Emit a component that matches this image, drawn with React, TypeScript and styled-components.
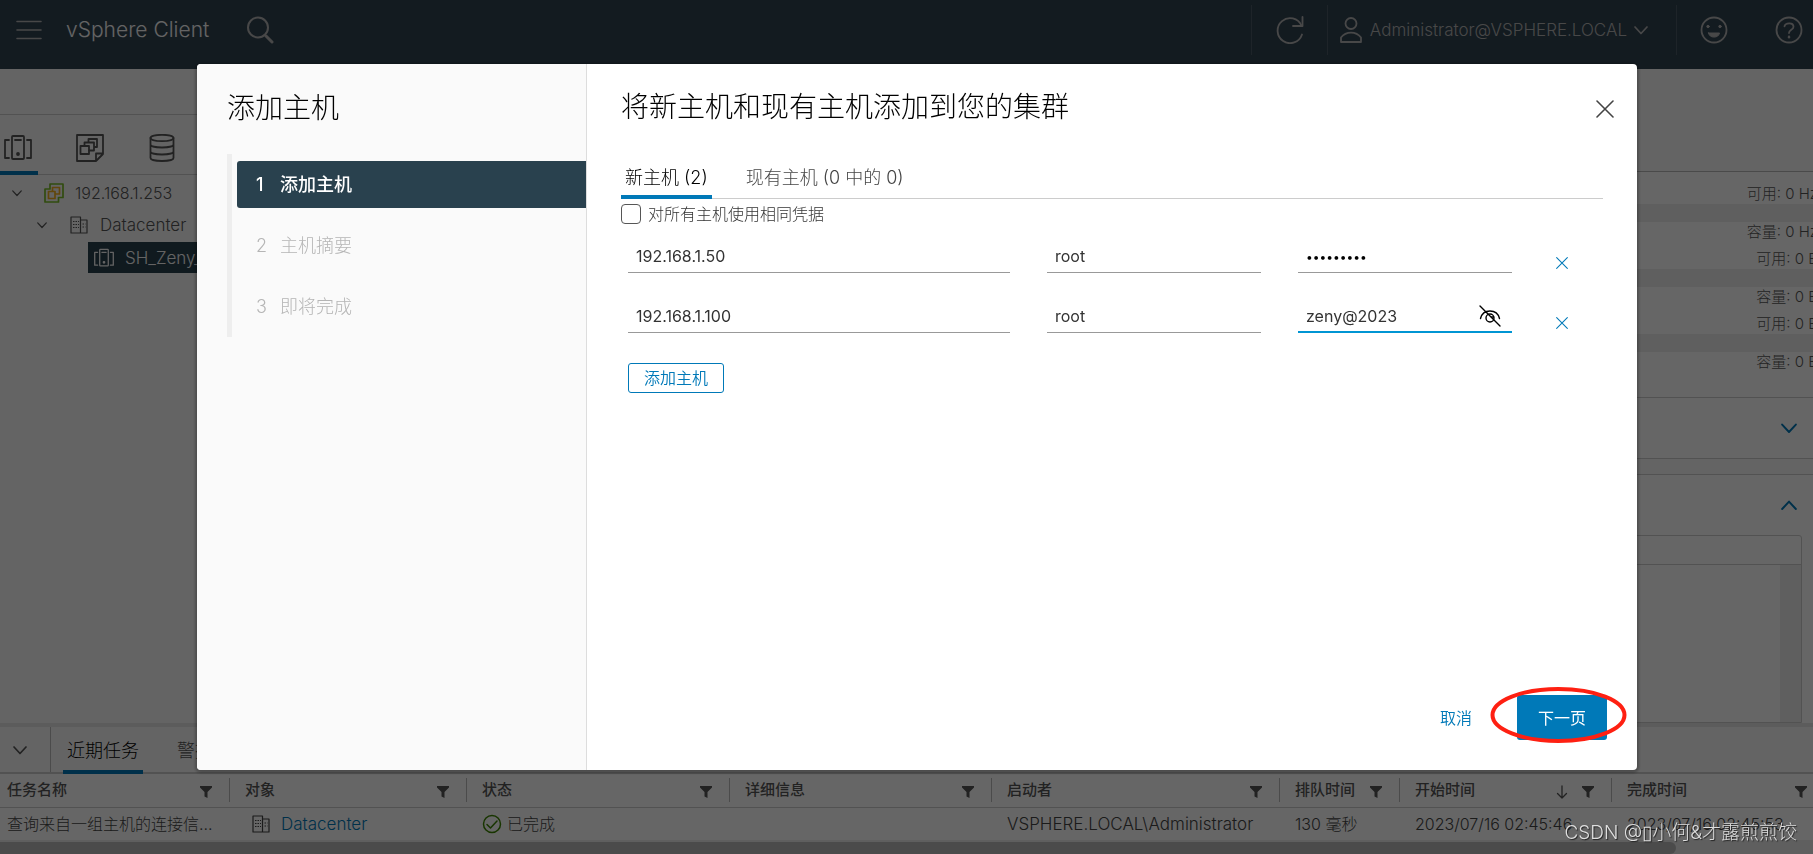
import React from 'react';
import styled, { createGlobalStyle, css } from 'styled-components';

const GlobalStyle = createGlobalStyle`
  *, *::before, *::after { box-sizing: border-box; }
  body {
    margin: 0;
    overflow: hidden;
    background: #fafafa;
    color: #565656;
    font: 300 16px/20px Inter, 'Noto Sans CJK SC', sans-serif;
  }
  button, input { font: inherit; color: inherit; }
  button { background: none; border: 0; padding: 0; cursor: pointer; }
  a { text-decoration: none; }
  svg { display: block; flex: none; }
`;

/* ---------- Icons ---------- */

const Svg = styled.svg<{ $stroke?: number }>`
  fill: none;
  stroke: currentColor;
  stroke-width: ${(p) => p.$stroke ?? 2};
  stroke-linecap: round;
  stroke-linejoin: round;
`;

type IconProps = { size?: number };

const ChevronDown = ({ size = 14 }: IconProps) => (
  <Svg width={size} height={size} viewBox="0 0 14 14" $stroke={1.7}>
    <path d="M1 4l6 6.5L13 4" />
  </Svg>
);
const ChevronUp = ({ size = 14 }: IconProps) => (
  <Svg width={size} height={size} viewBox="0 0 14 14" $stroke={1.7}>
    <path d="M1 10.5L7 4l6 6.5" />
  </Svg>
);
const CrossIcon = ({ size = 18 }: IconProps) => (
  <Svg width={size} height={size} viewBox="0 0 18 18" $stroke={1.6}>
    <path d="M1 1l16 16M17 1L1 17" />
  </Svg>
);
const MenuIcon = () => (
  <Svg width="26" height="20" viewBox="0 0 26 20" $stroke={1.6}>
    <path d="M1 1.5h24M1 10h24M1 18.5h24" />
  </Svg>
);
const SearchIcon = () => (
  <Svg width="28" height="28" viewBox="0 0 28 28">
    <circle cx="12" cy="11.500" r="10" />
    <path d="M20 20l6 6" strokeWidth="3" />
  </Svg>
);
const RefreshIcon = () => (
  <Svg width="28" height="28" viewBox="0 0 28 28" $stroke={1.8}>
    <path d="M26 18.500A12.500 12.500 0 1 1 25.500 9.500" />
    <path d="M26.500 1v9h-9.500" />
  </Svg>
);
const UserIcon = () => (
  <Svg width="24" height="28" viewBox="0 0 24 28" $stroke={1.8}>
    <circle cx="12" cy="7.500" r="5.500" />
    <path d="M2 26v-4.500c5-6.500 15-6.500 20 0V26z" />
  </Svg>
);
const SmileyIcon = () => (
  <Svg width="28" height="28" viewBox="0 0 28 28" $stroke={1.8}>
    <circle cx="14" cy="14" r="12.500" />
    <circle cx="8" cy="10.500" r="1.200" fill="currentColor" strokeWidth="1" />
    <circle cx="20" cy="10.500" r="1.200" fill="currentColor" strokeWidth="1" />
    <path d="M8.500 17h11a5.600 5 0 0 1-11 0z" fill="currentColor" strokeWidth="1" />
  </Svg>
);
const HelpIcon = () => (
  <Svg width="28" height="28" viewBox="0 0 28 28" $stroke={1.8}>
    <circle cx="14" cy="14" r="12.500" />
    <path d="M9.500 10.300c1-4 9-4 9 .4 0 3.200-4.500 3-4.500 6.300" />
    <path d="M14 20.800v.4" strokeWidth="2.400" />
  </Svg>
);
const ClusterIcon = ({ size = 28 }: IconProps) => (
  <Svg width={size} height={size} viewBox="0 0 28 28" $stroke={1.8}>
    <rect x="8" y="2" width="12" height="23" rx="1" />
    <path d="M11 6h6M5 6H1v18h4M23 6h4v18h-4" />
    <circle cx="14" cy="20" r="1" fill="currentColor" />
  </Svg>
);
const TemplatesIcon = () => (
  <Svg width="28" height="28" viewBox="0 0 28 28" $stroke={1.8}>
    <path d="M27 1H1v26h19l7-7zM27 19.500h-7V27" />
    <rect x="4.500" y="12" width="8.500" height="8" />
    <path d="M8.500 12V8.500H18v8h-5M12.500 8.500V5H21v8h-3" />
  </Svg>
);
const StorageIcon = () => (
  <Svg width="28" height="28" viewBox="0 0 28 28" $stroke={1.8}>
    <ellipse cx="14" cy="4" rx="11.500" ry="3.200" />
    <path d="M2.500 4v20c0 4 23 4 23 0V4M2.500 10.500c0 4 23 4 23 0M2.500 17.500c0 4 23 4 23 0" />
  </Svg>
);
const VCenterIcon = () => (
  <Svg width="20" height="20" viewBox="0 0 20 20" $stroke={1.7}>
    <path d="M6 1h13v13.500h-4.500V19H1V6h5z" stroke="#7bbd27" />
    <path d="M8.500 8V4.500h7V11H12M4.500 8.500H11v7H4.500z" stroke="#f2b01e" />
  </Svg>
);
const DatacenterIcon = () => (
  <Svg width="18" height="18" viewBox="0 0 18 18" $stroke={1.2}>
    <path d="M1 17V1h9.500v16zM10.500 4H17v13H1" />
    <path
      d="M3 5.500h6M3 8.500h6M3 11.500h6M12.500 8h3M12.500 11h3"
      strokeDasharray="1.500 1"
      strokeLinecap="butt"
    />
  </Svg>
);
const FilterIcon = () => (
  <Svg width="12" height="12" viewBox="0 0 12 12">
    <path d="M0 0h12v1.500L7.500 6v6L4.500 10.500V6L0 1.500z" fill="currentColor" stroke="none" />
  </Svg>
);
const SortDownIcon = () => (
  <Svg width="12" height="14" viewBox="0 0 12 14" $stroke={1.3}>
    <path d="M6 1v12M1.500 8.500L6 13l4.500-4.500" />
  </Svg>
);
const SuccessIcon = () => (
  <Svg width="20" height="20" viewBox="0 0 20 20" $stroke={1.5}>
    <g stroke="#3c8500">
      <circle cx="10" cy="10" r="8.500" />
      <path d="M5 10.500l3.500 3.500L15 7" />
    </g>
  </Svg>
);
const EyeOffIcon = () => (
  <Svg width="22" height="22" viewBox="0 0 22 22" $stroke={1.4}>
    <g stroke="#000">
      <path d="M1 1l20 20M1.500 13.500C4 3.500 18 3.500 20.500 13.500" />
      <circle cx="11" cy="13" r="4" />
      <path d="M12.500 12h2" />
    </g>
  </Svg>
);

/* ---------- Application shell ---------- */

const Shell = styled.div`
  display: flex;
  flex-direction: column;
  height: 100vh;
`;

const TopBar = styled.header`
  display: flex;
  align-items: center;
  flex: none;
  height: 69px;
  padding: 0 10px 9px 16px;
  background: #314452;
  color: #b4b4b4;
`;

const Brand = styled.span`
  margin: 0 37px 0 24px;
  font-size: 21px;
  line-height: 28px;
  color: #fafafa;
  white-space: nowrap;
`;

const TopActions = styled.div`
  display: flex;
  align-items: center;
  height: 50px;
  margin-left: auto;
`;

const TopGroup = styled.div<{ $pad: string }>`
  display: flex;
  align-items: center;
  height: 100%;
  padding: ${(p) => p.$pad};
  border-left: 1px solid #4c5a66;
`;

const UserButton = styled.button`
  display: flex;
  align-items: center;
  gap: 7px;
  font-size: 17px;
  white-space: nowrap;
`;

const HelpGroup = styled.div`
  display: flex;
  gap: 47px;
`;

const Workspace = styled.div`
  display: flex;
  flex: 1;
  min-height: 0;
  overflow: hidden;
`;

const Navigator = styled.nav`
  flex: none;
  width: 350px;
  border-right: 1px solid #ccc;
`;

const NavigatorTop = styled.div`
  height: 46px;
  border-bottom: 1px solid #ccc;
`;

const InventoryTabs = styled.div`
  display: flex;
  gap: 34px;
  height: 60px;
  border-bottom: 1px solid #ccc;
`;

const InventoryTab = styled.button<{ $active?: boolean }>`
  display: flex;
  align-items: center;
  width: 38px;
  height: 60px;
  padding: 10px 0 0 4px;
  border-bottom: 4px solid ${(p) => (p.$active ? '#0079b8' : 'transparent')};
`;

const Tree = styled.ul`
  margin: 0;
  padding: 2px 0 0;
  list-style: none;
  font-size: 17px;
`;

const TreeRow = styled.li<{ $indent: number; $selected?: boolean }>`
  display: flex;
  align-items: center;
  height: 32px;
  margin-left: ${(p) => p.$indent}px;
  white-space: nowrap;
  ${(p) =>
    p.$selected &&
    css`
      height: 31px;
      margin-top: 1px;
      padding-left: 6px;
      background: #29414e;
      color: #fafafa;
    `}
`;

const TreeIcon = styled.span<{ $before: number; $after: number }>`
  margin: 0 ${(p) => p.$after}px 0 ${(p) => p.$before}px;
`;

const Address = styled.span`
  font-size: 16px;
`;

const Content = styled.main`
  display: flex;
  flex: 1;
  flex-direction: column;
  min-width: 0;
`;

const ContentHeader = styled.div`
  flex: none;
  height: 103px;
  border-bottom: 1px solid #b8b8b8;
`;

const StatList = styled.div`
  flex: none;
  margin-right: -5px;
  padding: 12px 0 25px;
  border-bottom: 1px solid #ccc;
  background: #fff;
  font-size: 15px;
  text-align: right;
`;

const Stat = styled.div`
  & + & {
    margin-top: 7px;
  }
`;

const StatBar = styled.div`
  height: 18px;
  background: #ededed;
`;

const Card = styled.section<{ $grow?: boolean }>`
  display: flex;
  flex-direction: column;
  flex: ${(p) => (p.$grow ? '1' : 'none')};
  min-height: 0;
  background: #fff;
  border-bottom: ${(p) => (p.$grow ? '0' : '1px solid #ccc')};
  & + & {
    margin-top: 15px;
    border-top: 1px solid #ccc;
  }
`;

const CardToggle = styled.button`
  display: flex;
  align-items: center;
  justify-content: flex-end;
  flex: none;
  height: 60px;
  padding-right: 16px;
  color: #0079b8;
`;

const Grid = styled.div`
  display: flex;
  flex-direction: column;
  flex: 1;
  margin: 0 11px 0 24px;
  border: 1px solid #ccc;
  border-radius: 3px 3px 0 0;
`;

const GridHead = styled.div`
  height: 29px;
  border-bottom: 1px solid #ccc;
`;

const GridScroll = styled.div`
  flex: 1;
  width: 21px;
  margin-left: auto;
  background: #ededed;
`;

/* ---------- Recent tasks ---------- */

const Tasks = styled.section`
  display: flex;
  flex-direction: column;
  flex: none;
  border-top: 4px solid #e6e6e6;
  background: #fafafa;
`;

const TasksTabs = styled.div`
  display: flex;
  height: 47px;
  border-bottom: 2px solid #ccc;
`;

const CollapseButton = styled.button`
  display: flex;
  align-items: center;
  justify-content: center;
  width: 51px;
  padding-right: 10px;
  border-right: 1px solid #bbb;
`;

const TaskTab = styled.button<{ $active?: boolean }>`
  height: 47px;
  padding: 5px 4px 0;
  border-bottom: 4px solid ${(p) => (p.$active ? '#0079b8' : 'transparent')};
  color: ${(p) => (p.$active ? '#000' : '#565656')};
  font-size: 18px;
  white-space: nowrap;
`;

const TaskTabList = styled.div`
  display: flex;
  gap: 30px;
  margin-left: 12px;
`;

const TaskTable = styled.table`
  width: 100%;
  table-layout: fixed;
  border-collapse: collapse;
  background: #fff;
`;

const Column = styled.col<{ $w: number }>`
  width: ${(p) => p.$w}px;
`;

const HeadCell = styled.th`
  height: 33px;
  padding: 0;
  border-bottom: 1px solid #ccc;
  font-size: 15px;
  font-weight: 500;
  text-align: left;
  white-space: nowrap;
`;

const HeadInner = styled.div<{ $first?: boolean; $last?: boolean }>`
  display: flex;
  align-items: center;
  gap: 14px;
  height: 24px;
  padding: 0 ${(p) => (p.$last ? 6 : 17)}px 0 ${(p) => (p.$first ? 7 : 15)}px;
  border-right: ${(p) => (p.$last ? '0' : '1px solid #bbb')};
`;

const HeadLabel = styled.span`
  margin-right: auto;
`;

const HeadIcons = styled.span`
  display: flex;
  align-items: center;
  gap: 14px;
  padding-top: 4px;
`;

const Cell = styled.td<{ $first?: boolean }>`
  height: 33px;
  padding: 0 0 0 ${(p) => (p.$first ? 7 : 15)}px;
  color: #444;
  white-space: nowrap;
`;

const CellLine = styled.div<{ $gap?: number; $inset?: number }>`
  display: flex;
  align-items: center;
  gap: ${(p) => p.$gap ?? 0}px;
  padding-left: ${(p) => p.$inset ?? 0}px;
`;

const Wide = styled.span`
  font-size: 17px;
`;

const ObjectLink = styled.a`
  color: #0079b8;
  font-size: 17px;
`;

const ScrollTrack = styled.div`
  height: 14px;
  padding: 2px 137px 0 0;
  background: #ededed;
`;

const ScrollThumb = styled.div`
  height: 12px;
  border-radius: 0 6px 6px 0;
  background: #bbb;
`;

/* ---------- Wizard dialog ---------- */

const Backdrop = styled.div`
  position: fixed;
  inset: 0;
  display: flex;
  padding: 64px 176px 84px 197px;
  background: rgba(0, 0, 0, 0.6);
`;

const Dialog = styled.div`
  display: flex;
  flex: 1;
  overflow: hidden;
  border-radius: 4px;
  background: #fff;
  box-shadow: 0 1px 3px 2px rgba(0, 0, 0, 0.25);
`;

const Steps = styled.aside`
  flex: none;
  width: 390px;
  padding: 26px 0 0 30px;
  border-right: 1px solid #ddd;
  background: #fafafa;
`;

const Heading = styled.h2`
  margin: 0;
  color: #000;
  font-size: 28px;
  font-weight: 300;
  line-height: 36px;
`;

const StepList = styled.ol`
  display: flex;
  flex-direction: column;
  gap: 14px;
  margin: 28px 0 0;
  padding: 7px 0 7px 5px;
  border-left: 5px solid #eee;
  list-style: none;
`;

const Step = styled.li<{ $active?: boolean }>`
  display: flex;
  align-items: center;
  gap: 12px;
  height: 47px;
  padding-left: 19px;
  border-radius: 3px 0 0 3px;
  background: ${(p) => (p.$active ? '#29414e' : 'transparent')};
  color: ${(p) => (p.$active ? '#fff' : '#b5b5b5')};
  font-size: 18px;
  font-weight: ${(p) => (p.$active ? 500 : 300)};
`;

const StepNumber = styled.span`
  width: 12px;
`;

const Panel = styled.div`
  display: flex;
  flex: 1;
  flex-direction: column;
  min-width: 0;
  padding: 25px 30px 30px 34px;
`;

const PanelHeader = styled.div`
  display: flex;
  align-items: center;
  justify-content: space-between;
  margin-right: -7px;
`;

const CloseButton = styled.button`
  padding-top: 4px;
  color: #444;
`;

const Tabs = styled.div`
  display: flex;
  gap: 30px;
  height: 38px;
  margin: 36px 4px 0 0;
  border-bottom: 1px solid #ccc;
`;

const Tab = styled.button<{ $active?: boolean }>`
  height: 38px;
  padding: 0 4px;
  border-bottom: 4px solid ${(p) => (p.$active ? '#0079b8' : 'transparent')};
  color: ${(p) => (p.$active ? '#000' : '#454545')};
  font-size: 18px;
  white-space: nowrap;
`;

const SameCredentials = styled.label`
  display: flex;
  align-items: center;
  gap: 7px;
  height: 20px;
  margin-top: 5px;
  color: #333;
`;

const Checkbox = styled.input`
  width: 20px;
  height: 20px;
  margin: 0;
  appearance: none;
  border: 1px solid #565656;
  border-radius: 4px;
`;

const HostRows = styled.div`
  display: grid;
  grid-template-columns: minmax(0, 382fr) minmax(0, 214fr) minmax(0, 214fr) 54px;
  gap: 27px 37px;
  margin: 16px 4px 0 7px;
`;

const Field = styled.div<{ $focus?: boolean }>`
  display: flex;
  align-items: center;
  height: 33px;
  padding: 0 11px 0 8px;
  border-bottom: ${(p) => (p.$focus ? '2px solid #0095d3' : '1px solid #999')};
`;

const TextInput = styled.input`
  flex: 1;
  min-width: 0;
  height: 28px;
  padding: 0;
  border: 0;
  outline: 0;
  background: none;
  color: #333;
  font-weight: 400;
  &[type='password'] {
    color: #000;
    font-size: 12px;
  }
`;

const RemoveButton = styled.button`
  display: flex;
  align-items: center;
  justify-content: center;
  align-self: end;
  width: 26px;
  height: 20px;
  color: #0079b8;
`;

const AddHostButton = styled.button`
  align-self: flex-start;
  height: 30px;
  margin: 30px 0 0 7px;
  padding: 0 15px;
  border: 1px solid #0079b8;
  border-radius: 3px;
  color: #0079b8;
  font-weight: 350;
`;

const DialogFooter = styled.div`
  display: flex;
  align-items: center;
  justify-content: flex-end;
  gap: 45px;
  margin-top: auto;
`;

const CancelButton = styled.button`
  color: #0079b8;
  font-weight: 350;
`;

const NextWrap = styled.div`
  position: relative;
`;

const NextButton = styled.button`
  height: 45px;
  padding: 0 21px;
  border-radius: 3px;
  background: #0079b8;
  color: #fff;
  font-weight: 400;
`;

const Highlight = styled.svg`
  position: absolute;
  left: -27px;
  top: -9px;
  fill: none;
  stroke: #fe2012;
  stroke-width: 4;
  pointer-events: none;
`;

const Watermark = styled.div`
  position: fixed;
  right: 16px;
  bottom: 7px;
  color: #dedede;
  font-size: 19px;
  line-height: 28px;
  text-shadow: 1px 1px 1px #222;
  white-space: nowrap;
`;

/* ---------- Data ---------- */

const columns = [
  { name: '任务名称', width: 230 },
  { name: '对象', width: 237 },
  { name: '状态', width: 263 },
  { name: '详细信息', width: 262 },
  { name: '启动者', width: 288 },
  { name: '排队时间', width: 120 },
  { name: '开始时间', width: 212, sorted: true },
  { name: '完成时间', width: 201 },
];

const steps = ['添加主机', '主机摘要', '即将完成'];

const hosts = [
  { address: '192.168.1.50', user: 'root', password: 'zeny@2023', visible: false },
  { address: '192.168.1.100', user: 'root', password: 'zeny@2023', visible: true },
];

export default function App() {
  return (
    <>
      <GlobalStyle />
      <Shell>
        <TopBar>
          <button aria-label="菜单"><MenuIcon /></button>
          <Brand>vSphere Client</Brand>
          <button aria-label="搜索"><SearchIcon /></button>
          <TopActions>
            <TopGroup $pad="0 23px 0 24px">
              <button aria-label="刷新"><RefreshIcon /></button>
            </TopGroup>
            <TopGroup $pad="0 28px 0 11px">
              <UserButton>
                <UserIcon />
                Administrator@VSPHERE.LOCAL
                <ChevronDown />
              </UserButton>
            </TopGroup>
            <TopGroup $pad="0 0 0 23px">
              <HelpGroup>
                <button aria-label="反馈"><SmileyIcon /></button>
                <button aria-label="帮助"><HelpIcon /></button>
              </HelpGroup>
            </TopGroup>
          </TopActions>
        </TopBar>

        <Workspace>
          <Navigator>
            <NavigatorTop />
            <InventoryTabs>
              <InventoryTab $active aria-label="主机和集群"><ClusterIcon /></InventoryTab>
              <InventoryTab aria-label="虚拟机和模板"><TemplatesIcon /></InventoryTab>
              <InventoryTab aria-label="存储"><StorageIcon /></InventoryTab>
            </InventoryTabs>
            <Tree>
              <TreeRow $indent={12}>
                <ChevronDown size={10} />
                <TreeIcon $before={22} $after={11}><VCenterIcon /></TreeIcon>
                <Address>192.168.1.253</Address>
              </TreeRow>
              <TreeRow $indent={37}>
                <ChevronDown size={10} />
                <TreeIcon $before={23} $after={12}><DatacenterIcon /></TreeIcon>
                Datacenter
              </TreeRow>
              <TreeRow $indent={88} $selected>
                <TreeIcon $before={0} $after={11}><ClusterIcon size={20} /></TreeIcon>
                SH_Zeny_
              </TreeRow>
            </Tree>
          </Navigator>
          <Content>
            <ContentHeader />
            <StatList>
              <Stat>可用: 0 Hz</Stat>
              <StatBar />
              <Stat>容量: 0 Hz</Stat>
              <Stat>可用: 0 B</Stat>
              <StatBar />
              <Stat>容量: 0 B</Stat>
              <Stat>可用: 0 B</Stat>
              <StatBar />
              <Stat>容量: 0 B</Stat>
            </StatList>
            <Card>
              <CardToggle aria-label="展开"><ChevronDown size={16} /></CardToggle>
            </Card>
            <Card $grow>
              <CardToggle aria-label="折叠"><ChevronUp size={16} /></CardToggle>
              <Grid>
                <GridHead />
                <GridScroll />
              </Grid>
            </Card>
          </Content>
        </Workspace>

        <Tasks>
          <TasksTabs>
            <CollapseButton aria-label="折叠任务"><ChevronDown /></CollapseButton>
            <TaskTabList>
              <TaskTab $active>近期任务</TaskTab>
              <TaskTab>警报</TaskTab>
            </TaskTabList>
          </TasksTabs>
          <TaskTable>
            <colgroup>
              {columns.map((c) => <Column key={c.name} $w={c.width} />)}
            </colgroup>
            <thead>
              <tr>
                {columns.map((c, i) => (
                  <HeadCell key={c.name} scope="col">
                    <HeadInner $first={i === 0} $last={i === columns.length - 1}>
                      <HeadLabel>{c.name}</HeadLabel>
                      <HeadIcons>
                        {c.sorted && <SortDownIcon />}
                        <FilterIcon />
                      </HeadIcons>
                    </HeadInner>
                  </HeadCell>
                ))}
              </tr>
            </thead>
            <tbody>
              <tr>
                <Cell $first>查询来自一组主机的连接信...</Cell>
                <Cell>
                  <CellLine $gap={11} $inset={7}>
                    <DatacenterIcon />
                    <ObjectLink href="#datacenter">Datacenter</ObjectLink>
                  </CellLine>
                </Cell>
                <Cell>
                  <CellLine $gap={5}>
                    <SuccessIcon />
                    已完成
                  </CellLine>
                </Cell>
                <Cell />
                <Cell><Wide>VSPHERE.LOCAL\Administrator</Wide></Cell>
                <Cell>130 毫秒</Cell>
                <Cell>2023/07/16 02:45:46</Cell>
                <Cell>2023/07/16 02:45:53</Cell>
              </tr>
            </tbody>
          </TaskTable>
          <ScrollTrack>
            <ScrollThumb />
          </ScrollTrack>
        </Tasks>
      </Shell>

      <Backdrop>
        <Dialog role="dialog" aria-modal="true" aria-label="添加主机">
          <Steps>
            <Heading>添加主机</Heading>
            <StepList>
              {steps.map((label, i) => (
                <Step key={label} $active={i === 0}>
                  <StepNumber>{i + 1}</StepNumber>
                  {label}
                </Step>
              ))}
            </StepList>
          </Steps>
          <Panel>
            <PanelHeader>
              <Heading>将新主机和现有主机添加到您的集群</Heading>
              <CloseButton aria-label="关闭"><CrossIcon /></CloseButton>
            </PanelHeader>
            <Tabs role="tablist">
              <Tab role="tab" aria-selected="true" $active>新主机 (2)</Tab>
              <Tab role="tab" aria-selected="false">现有主机 (0 中的 0)</Tab>
            </Tabs>
            <SameCredentials>
              <Checkbox type="checkbox" />
              对所有主机使用相同凭据
            </SameCredentials>
            <HostRows>
              {hosts.map((h) => (
                <React.Fragment key={h.address}>
                  <Field>
                    <TextInput aria-label="IP 地址或 FQDN" defaultValue={h.address} />
                  </Field>
                  <Field>
                    <TextInput aria-label="用户名" defaultValue={h.user} />
                  </Field>
                  <Field $focus={h.visible}>
                    <TextInput
                      aria-label="密码"
                      type={h.visible ? 'text' : 'password'}
                      defaultValue={h.password}
                    />
                    {h.visible && (
                      <button aria-label="隐藏密码"><EyeOffIcon /></button>
                    )}
                  </Field>
                  <RemoveButton aria-label="移除主机"><CrossIcon size={12} /></RemoveButton>
                </React.Fragment>
              ))}
            </HostRows>
            <AddHostButton>添加主机</AddHostButton>
            <DialogFooter>
              <CancelButton>取消</CancelButton>
              <NextWrap>
                <NextButton>下一页</NextButton>
                <Highlight width="137" height="58" viewBox="0 0 137 58">
                  <ellipse cx="68.500" cy="29" rx="66" ry="26" />
                </Highlight>
              </NextWrap>
            </DialogFooter>
          </Panel>
        </Dialog>
      </Backdrop>
      <Watermark>CSDN @▯小何&amp;才露煎煎饺</Watermark>
    </>
  );
}
